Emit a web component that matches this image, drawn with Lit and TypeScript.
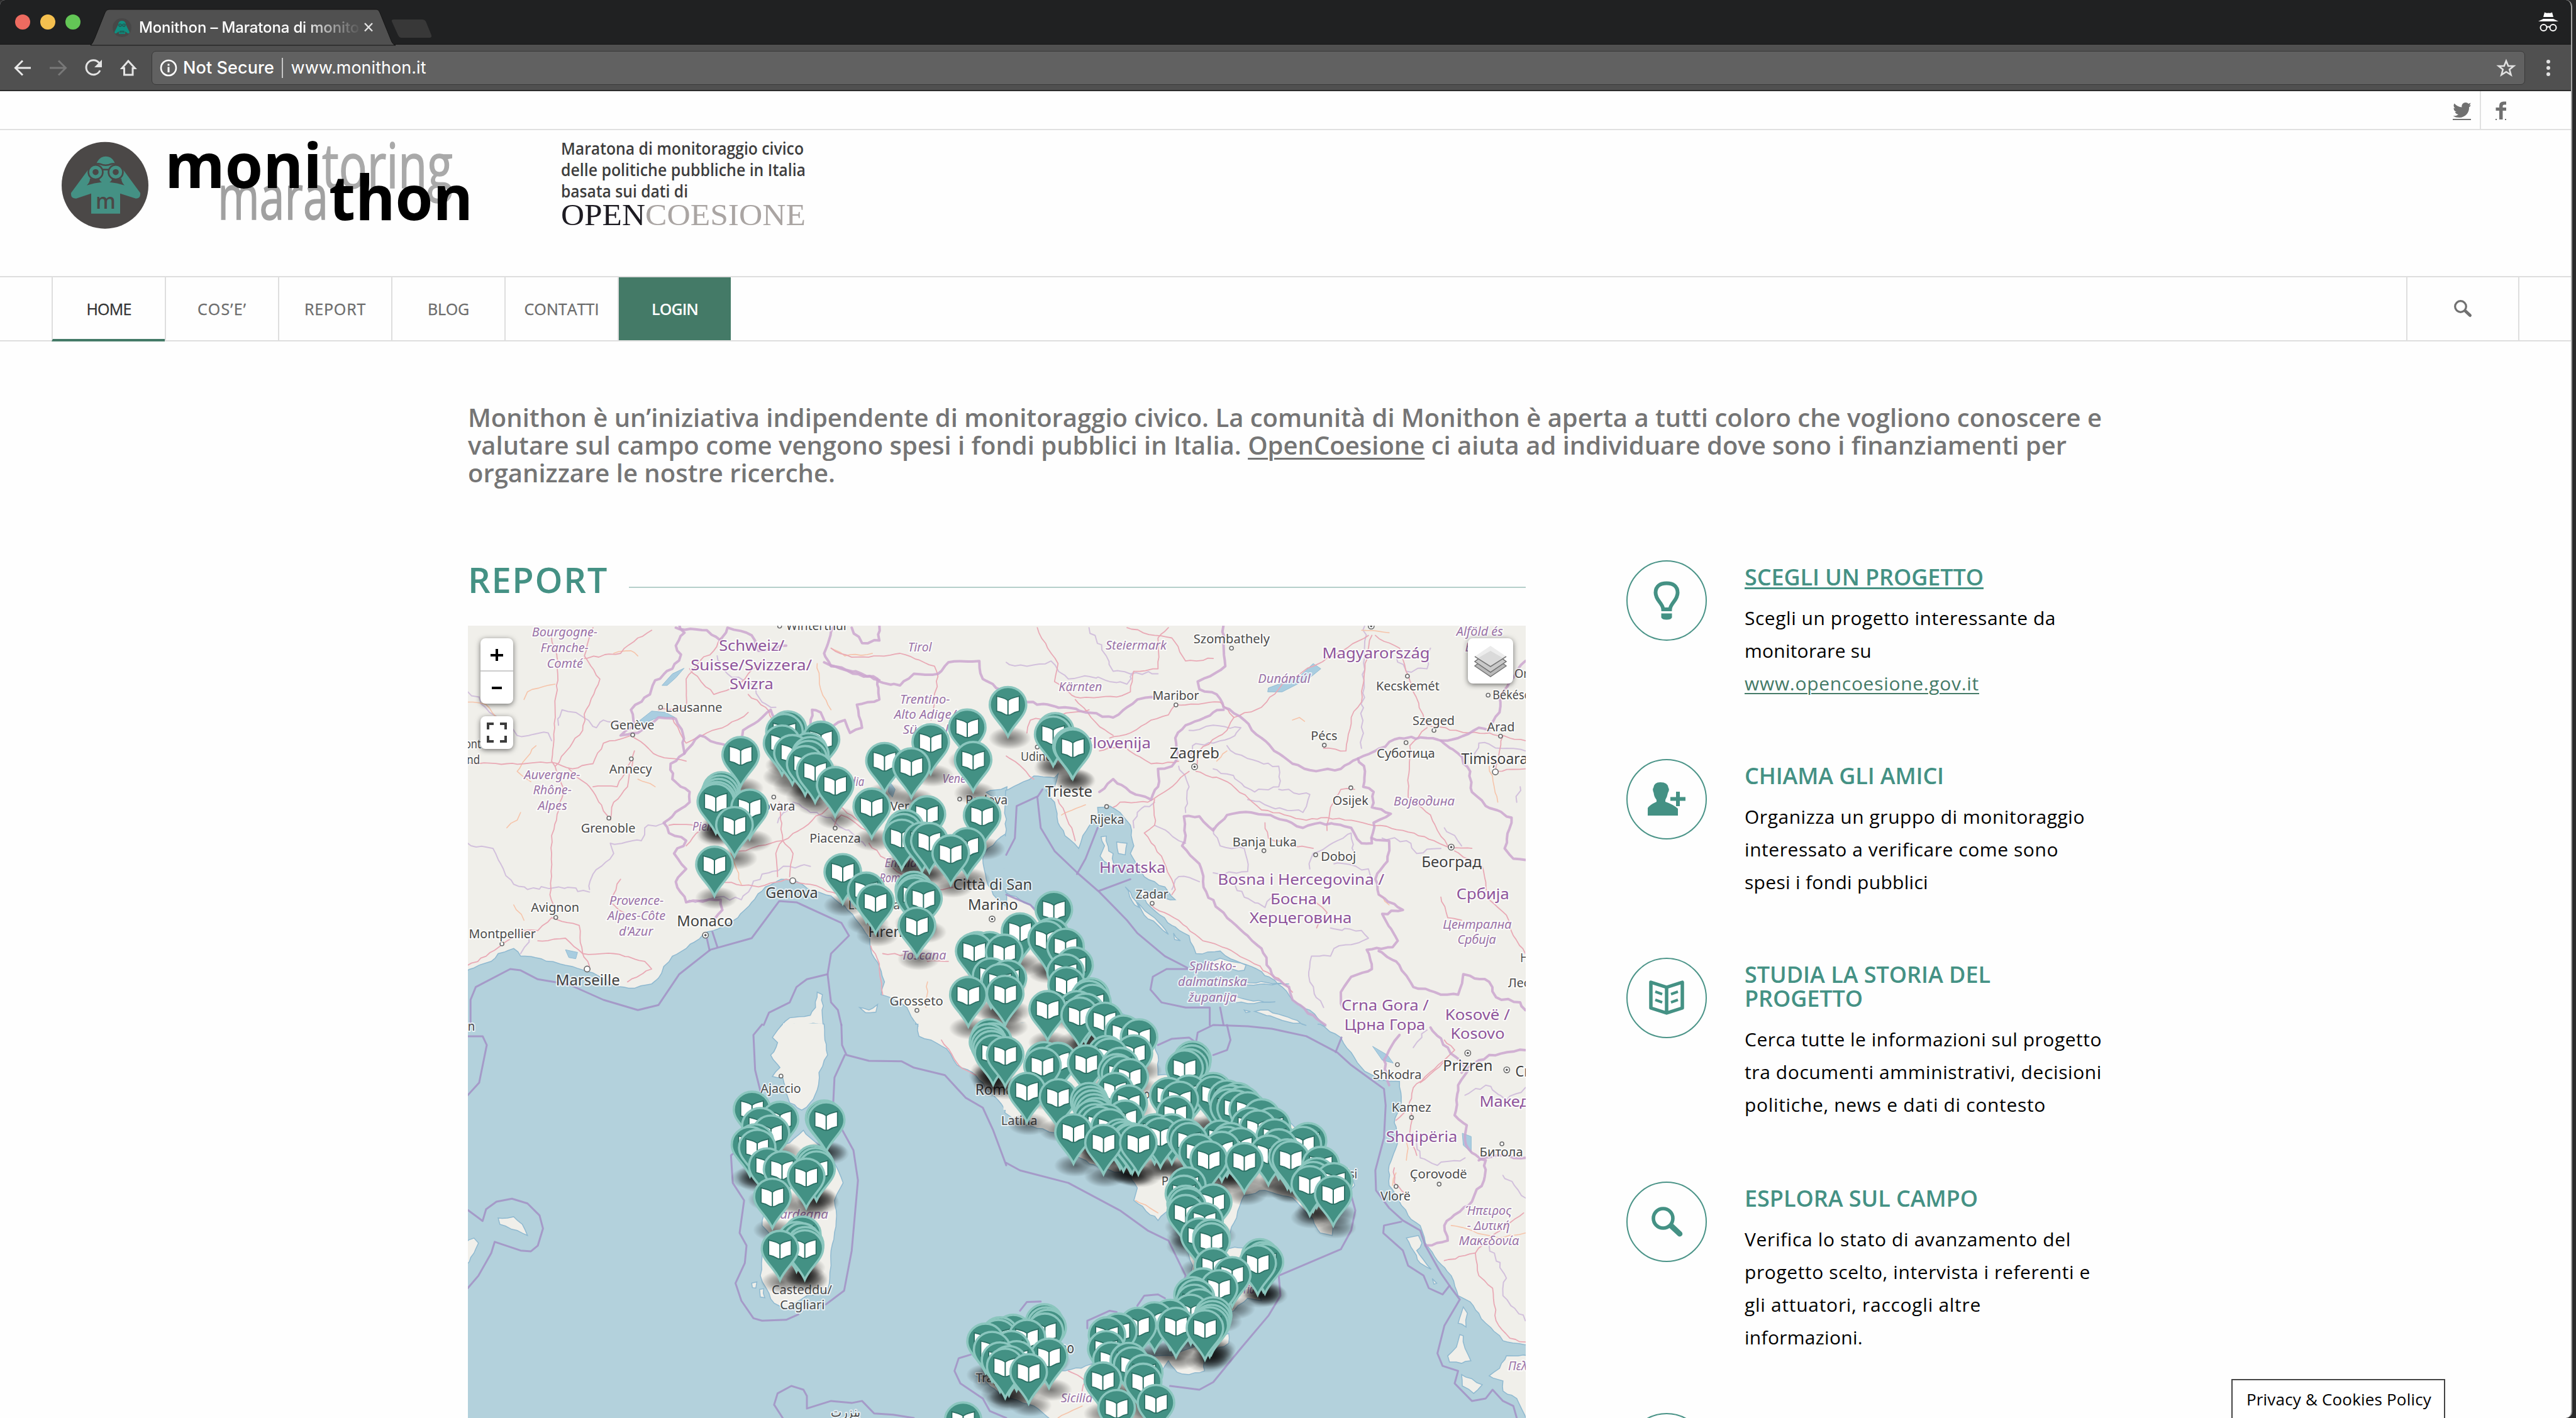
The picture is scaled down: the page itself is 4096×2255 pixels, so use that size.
import { LitElement, html, svg, css } from "lit";

/* One line of text, tracked so that it fills a given measure. */
class FitLine extends LitElement {
  static properties = { w: { type: Number } };
  static styles = css`
    :host { display: block; white-space: pre; width: max-content; }
  `;
  declare w: number;
  render() {
    return html`<slot></slot>`;
  }
  firstUpdated() {
    const n = (this.textContent || "").length;
    const natural = this.getBoundingClientRect().width;
    if (n > 1 && natural > 0) this.style.letterSpacing = (this.w - natural) / n + "px";
  }
}
customElements.define("fit-line", FitLine);

/* ---------- map data: four quadrants, each with its own local grid ---------- */
type Quad = { x: number; y: number; sx: number; sy: number };
const SX = 860 / 1568;
const Q: Record<string, Quad> = {
  nw: { x: 740, y: 990, sx: SX, sy: 640 / 1568 },
  ne: { x: 1600, y: 990, sx: SX, sy: 640 / 1568 },
  sw: { x: 740, y: 1630, sx: SX, sy: 625 / 1568 },
  se: { x: 1600, y: 1630, sx: SX, sy: 625 / 1568 },
};
const px = (q: string, x: number) => Q[q].x + x * Q[q].sx;
const py = (q: string, y: number) => Q[q].y + y * Q[q].sy;
const line = (q: string, pts: string, close = false) =>
  "M" +
  pts
    .trim()
    .split(/\s+/)
    .map((p) => {
      const [a, b] = p.split(",").map(Number);
      return px(q, a).toFixed(1) + " " + py(q, b).toFixed(1);
    })
    .join("L") +
  (close ? "Z" : "");
/* Adds a small regular wobble so that coasts and borders do not look ruled. */
const rough = (q: string, pts: string, amp: number, close = false) => {
  const raw = pts.trim().split(/\s+/).map((p) => p.split(",").map(Number));
  const P = raw.map(([a, b]) => [px(q, a), py(q, b)]);
  if (close) P.push(P[0]);
  let seed = 7 + P.length * 13;
  const rnd = () => ((seed = (seed * 16807) % 2147483647) / 2147483647) * 2 - 1;
  let d = `M${P[0][0].toFixed(1)} ${P[0][1].toFixed(1)}`;
  for (let i = 1; i < P.length; i++) {
    const [x0, y0] = P[i - 1];
    const [x1, y1] = P[i];
    const len = Math.hypot(x1 - x0, y1 - y0);
    const n = len > 300 ? 1 : Math.max(1, Math.round(len / 9));
    for (let k = 1; k < n; k++) {
      const t = k / n;
      d += `L${(x0 + (x1 - x0) * t + rnd() * amp).toFixed(1)} ${(y0 + (y1 - y0) * t + rnd() * amp).toFixed(1)}`;
    }
    d += `L${x1.toFixed(1)} ${y1.toFixed(1)}`;
  }
  return d + (close ? "Z" : "");
};

const SEA: [string, string][] = [
  ["nw", "0,1362 40,1335 75,1320 95,1290 140,1270 160,1300 220,1310 290,1335 310,1340 370,1365 390,1380 430,1415 490,1425 540,1408 560,1385 575,1340 600,1300 640,1270 690,1215 730,1195 790,1150 830,1090 870,1030 915,1000 960,1008 990,1035 1060,1065 1100,1105 1140,1170 1172,1230 1178,1290 1200,1340 1215,1400 1205,1450 1240,1465 1280,1500 1300,1550 1312,1572 0,1572"],
  ["nw", "1570,820 1540,850 1515,880 1500,920 1510,1000 1530,1060 1570,1110"],
  ["nw", "1510,662 1540,652 1570,640 1570,690 1530,680"],
  ["ne", "-2,655 50,620 80,598 140,605 150,590 140,640 115,655 140,700 150,780 170,830 210,880 222,830 250,775 265,780 265,720 300,715 330,740 360,790 370,870 360,900 400,990 460,1030 490,1080 440,1070 400,1040 380,1050 420,1110 480,1180 530,1220 550,1290 620,1280 650,1310 740,1360 800,1420 830,1470 880,1510 925,1572 420,1572 300,1500 240,1400 200,1270 130,1180 80,1110 -2,1050"],
  ["sw", "0,-3 1312,-3 1315,45 1350,60 1395,95 1425,160 1470,190 1500,230 1572,350 1572,1575 0,1575"],
  ["se", "-4,-3 910,-3 970,50 1000,110 1030,170 1080,220 1140,225 1145,310 1125,390 1135,470 1110,560 1110,640 1130,680 1165,760 1200,800 1215,870 1250,940 1290,1000 1310,1080 1345,1105 1370,1150 1390,1190 1440,1260 1515,1275 1515,1320 1450,1320 1430,1370 1400,1400 1440,1420 1440,1460 1480,1490 1508,1575 -4,1575"],
];
const LAND: [string, string][] = [
  ["nw", "1020,1440 1035,1450 1037,1572 915,1572 940,1540 1000,1530 1015,1500"],
  ["nw", "1143,1500 1170,1510 1195,1488 1190,1518 1160,1520"],
  ["sw", "905,20 920,-4 1040,-4 1050,120 1025,190 1020,260 1000,310 975,340 940,310 930,270 920,210 890,205 912,170 885,120 905,70 890,50"],
  ["sw", "980,420 1000,450 1060,520 1095,630 1070,700 1075,780 1060,900 1060,960 1050,1060 990,1080 930,1130 895,1110 880,1070 855,1000 860,900 880,830 860,800 880,640 830,560 850,480 940,470"],
  ["sw", "830,1030 845,1025 842,1050 832,1048"],
  ["sw", "853,1055 865,1052 868,1088 855,1085"],
  ["sw", "95,770 140,765 165,795 180,840 150,820 100,795"],
  ["sw", "0,870 25,850 38,870 25,910 0,960"],
  ["se", "-4,-4 410,-4 440,120 440,200 560,200 650,230 800,360 900,480 1000,590 1010,640 950,740 945,840 910,830 880,760 830,690 750,660 690,680 660,790 630,890 690,890 700,1000 740,1100 700,1090 660,1140 620,1170 560,1130 500,1100 520,1050 540,960 520,890 500,820 470,740 440,780 370,700 380,650 360,600 270,570 200,520 140,430 40,390 -4,350"],
  ["se", "-4,1400 170,1380 230,1360 300,1330 480,1320 645,1230 645,1270 570,1320 575,1380 530,1395 495,1385 470,1340 440,1400 430,1575 130,1575 80,1520 -4,1480"],
  ["sw", "1480,1400 1572,1400 1572,1490"],
  ["se", "1160,850 1195,840 1205,870 1190,900 1232,975 1200,950 1180,900"],
  ["se", "1315,1235 1325,1240 1330,1290 1347,1340 1320,1350 1285,1345 1280,1320 1305,1285"],
  ["se", "1320,1395 1380,1435 1355,1470 1322,1440"],
  ["se", "1325,1125 1337,1150 1333,1205 1310,1190"],
  ["se", "1235,1012 1248,1030 1240,1034"],
  ["ne", "275,835 290,832 297,890 310,900 310,965 295,940 272,910 285,870"],
  ["ne", "320,855 350,860 345,905 325,900"],
  ["ne", "345,1030 360,1050 385,1110 372,1100"],
  ["ne", "380,1090 440,1165 470,1215 440,1180 400,1140"],
  ["ne", "570,1325 620,1308 695,1335 690,1355 600,1352"],
  ["ne", "500,1402 640,1395 820,1408 700,1412"],
  ["ne", "590,1462 640,1448 700,1470 780,1478 700,1485 620,1470"],
  ["ne", "720,1515 760,1510 830,1545 870,1570 800,1550"],
  ["ne", "485,1210 505,1240 488,1235"],
  ["ne", "690,1510 708,1516 695,1520"],
];
const LAKES: [string, string][] = [
  ["nw", "505,382 540,345 580,350 608,370 560,368 520,392"],
  ["nw", "570,245 600,200 634,178 610,215 585,245"],
  ["nw", "1230,620 1246,650 1238,680 1226,660"],
  ["nw", "290,1275 325,1285 320,1310 300,1305"],
  ["ne", "758,270 760,255 850,210 890,160 912,180 880,215 800,270"],
  ["se", "1062,85 1105,120 1122,152 1090,140"],
  ["se", "1322,432 1348,445 1348,508 1325,480"],
];
const BORDERS: [string, string][] = [
  ["nw", "620,10 635,40 610,90 625,125 600,180 550,225 535,280 480,340 490,400 450,440 500,430 560,370 610,375 630,430 635,510 595,550 600,610 650,660 650,700 575,780 590,820 640,850 605,900 640,960 610,1010 640,1090 740,1080 745,1120 725,1150"],
  ["nw", "635,510 680,440 730,470 800,490 805,420 860,370 885,340 900,400 950,460 1000,400 1005,340 1030,350 1050,410 1100,380 1115,430 1150,410 1135,320 1200,300 1195,220 1090,175 1040,155"],
  ["nw", "1200,230 1260,245 1300,200 1370,200 1400,155 1490,150 1500,220 1568,270"],
  ["nw", "1070,10 1040,120 1060,170 1200,225"],
  ["nw", "610,20 700,30 740,70 760,20 830,50 850,110 930,90"],
  ["nw", "1120,20 1150,80 1200,70 1200,10"],
  ["ne", "0,270 60,310 170,330 230,350 310,370 340,340 380,300 420,290 460,290"],
  ["ne", "630,10 635,170 590,210 555,230 560,260 610,280 630,330 690,380 740,450 790,510 830,550 880,575 970,570 1020,530 1070,500 1140,450 1220,450 1260,460 1310,450 1370,410 1400,420"],
  ["ne", "630,340 600,350 560,380 520,400 490,450 500,520 480,560 440,570 440,640 420,690 360,660 310,610 270,660"],
  ["ne", "1020,530 1040,580 1035,640 1065,660 1060,720 1115,745 1065,780 1060,860 1030,860 1000,800 910,780 860,800 780,760 710,740 640,750 600,810 560,755 515,755 520,830 510,870 560,940 580,1050 620,1120 690,1210 740,1270 770,1370 820,1420 830,1470 890,1530 925,1568"],
  ["ne", "1060,840 1110,850 1105,930 1070,1000 1080,1060 1150,1120 1090,1135 1135,1240 1120,1265 1045,1275 1060,1350 1000,1380 970,1440 975,1500"],
  ["ne", "1260,460 1310,510 1345,580 1350,660 1390,715 1465,760 1445,880 1470,920 1505,925"],
  ["ne", "1505,150 1460,230 1430,290 1430,350 1400,400"],
  ["ne", "1080,1280 1130,1320 1180,1420 1260,1450 1310,1450 1325,1370 1400,1400 1420,1460 1490,1480 1505,1510"],
  ["se", "1140,40 1110,100 1095,140 1110,240"],
  ["se", "1230,10 1280,90 1340,180 1310,240 1305,300 1300,360 1335,400 1330,460 1350,510 1390,540 1385,620 1340,720 1290,770 1270,800 1280,860 1215,880"],
  ["se", "1320,190 1400,120 1505,100"],
  ["se", "1370,540 1440,520 1505,530"],
];
const SEALINES: [string, string][] = [
  ["nw", "15,1568 15,1470 30,1420 130,1350 160,1355 210,1390 300,1410 400,1470 500,1510 560,1490 620,1370 710,1275 830,1230 910,1085 960,1090 1090,1170 1112,1220 1060,1290 1050,1370 990,1390 960,1420 940,1480 880,1520 865,1568"],
  ["nw", "1050,1370 1060,1480 1080,1510 1090,1568"],
  ["nw", "700,1230 708,1278"],
  ["nw", "716,1205 730,1262"],
  ["sw", "860,-2 835,40 840,180 860,290 815,470 770,520 775,630 808,700 795,830 815,880 810,950 783,1030 800,1100 835,1170 860,1180 930,1176 965,1155"],
  ["sw", "1090,-2 1092,80 1105,120 1170,143 1265,145 1300,170 1390,200 1450,290 1500,330 1530,420 1568,560"],
  ["sw", "1100,120 1070,210 1065,350 1125,500 1138,620 1120,900 1098,1060 1045,1115"],
  ["sw", "7,45 50,45 62,80 40,230 7,280"],
  ["sw", "7,738 50,782 60,735 90,705 135,693 180,712 215,760 225,812 210,880 190,903 160,900 85,865 75,910 38,1000 7,1050"],
  ["sw", "920,1568 895,1515 905,1470 945,1440 980,1455 990,1480 990,1530 1060,1500 1120,1508 1150,1500 1185,1550 1240,1555 1300,1568"],
  ["sw", "1470,1313 1430,1330 1418,1380 1435,1430 1500,1490 1520,1540 1568,1568"],
  ["ne", "105,650 90,680 100,800 140,890 210,980 270,1050 350,1160 380,1210 460,1300 525,1345"],
  ["ne", "90,678 30,715 25,840 0,905"],
  ["ne", "265,800 230,920 205,980"],
  ["ne", "270,1045 360,1000"],
  ["ne", "0,1060 70,1100 130,1190"],
  ["ne", "525,1350 465,1350 425,1380 418,1430 450,1480 520,1500 590,1500 590,1568"],
  ["ne", "620,1500 630,1568"],
  ["se", "440,80 480,55 530,50 550,70 555,30 600,0 700,5 770,15 870,45 960,110 1000,160 1060,220 1095,255 1100,320 1095,450 1070,580 1072,660 1110,730 1150,780 1200,820 1215,880 1260,990 1290,1050 1315,1095 1270,1200 1250,1310 1265,1360 1310,1380 1300,1430 1350,1500 1390,1490 1410,1455 1440,1500 1470,1520 1480,1568"],
  ["se", "640,0 650,60 640,100 600,120"],
  ["se", "955,108 972,50"],
  ["se", "0,550 40,580 180,630 330,740 410,820 470,860 520,1000 500,1080"],
  ["se", "1000,680 1012,740 1000,820 970,895 790,1000 795,1080 760,1160 680,1290 600,1425 560,1455 475,1440"],
  ["se", "1145,785 1095,800 1093,830 1150,900 1165,960 1210,1000 1225,1050 1265,1075 1285,1040"],
  ["se", "380,1120 400,1080 440,1075 460,1090"],
  ["se", "235,1210 235,1180 300,1140 320,1145"],
  ["se", "40,1140 60,1105 100,1103"],
];
const ADMIN: [string, string][] = [
  ["nw", "7,270 40,290 70,350 130,400 150,440 240,430 250,460"],
  ["nw", "270,400 280,340 320,350 380,410 400,380 450,390"],
  ["nw", "7,860 80,880 110,960 140,1020 180,1040 270,1030 360,1050"],
  ["nw", "360,1040 370,980 430,900 420,860 510,850 520,800 580,780"],
  ["nw", "200,1210 160,1290"],
  ["nw", "640,1090 730,1070 800,1080 860,980 940,950 1000,950"],
  ["nw", "905,780 950,700 1000,740 1060,760 1160,870"],
  ["nw", "730,130 760,200 830,240 860,310 900,330"],
  ["ne", "0,155 60,170 130,150 180,220 240,210 350,240 370,190"],
  ["ne", "240,20 290,130 310,190 440,200"],
  ["ne", "530,420 600,400 680,410 650,450 600,470 540,480 530,540"],
  ["ne", "640,480 700,530 790,560 790,640 720,660 640,590 600,570"],
  ["ne", "790,650 880,670 860,740 750,710 700,690"],
  ["ne", "500,560 530,640 520,740"],
  ["ne", "600,800 620,870 690,880 700,970 600,975"],
  ["ne", "640,990 690,1070 750,1110 770,1070"],
  ["ne", "880,960 890,900 960,850 1000,820 1010,900"],
  ["ne", "950,940 1050,960 1060,1010"],
  ["ne", "940,1190 1030,1200 1050,1230 950,1270 940,1300 885,1300 880,1400 920,1500"],
  ["ne", "1090,840 1160,850 1190,900 1260,880"],
  ["ne", "1270,800 1320,870"],
  ["ne", "370,800 380,740 430,700"],
  ["ne", "430,790 500,850 520,860"],
  ["ne", "560,1010 500,990 480,1040"],
  ["ne", "1040,10 1030,490"],
  ["ne", "1130,130 1160,190 1220,180 1230,100"],
  ["ne", "1360,540 1370,470 1505,500"],
  ["ne", "1480,700 1490,640"],
  ["se", "1180,430 1200,530 1250,560 1330,530"],
  ["se", "1330,280 1390,240 1450,300 1505,250"],
  ["se", "1440,600 1505,690"],
  ["se", "1400,880 1450,1010 1440,1080 1505,1180"],
  ["se", "1220,20 1180,90"],
];
const ROADS: [string, string][] = [
  ["nw", "250,60 270,160 260,330 250,540 275,600 285,660 250,830 250,900 245,1060 260,1120"],
  ["nw", "370,20 345,130 390,220 350,340 340,420 310,470 260,560"],
  ["nw", "7,545 120,550 250,545 310,570 370,550 400,470 480,440"],
  ["nw", "340,140 450,120 500,60 540,30"],
  ["nw", "300,570 360,640 420,770 430,700 470,640 490,500"],
  ["nw", "370,640 440,640 480,540"],
  ["nw", "600,370 640,470 700,430 760,400 820,350"],
  ["nw", "480,440 560,520 640,540"],
  ["nw", "560,340 640,330 640,220 680,150 720,110 740,60"],
  ["nw", "650,180 720,280 790,250 820,200 860,150"],
  ["nw", "820,280 870,330 900,400 920,500"],
  ["nw", "590,790 690,790 640,870"],
  ["nw", "780,900 850,870 920,850 980,800 1070,700 1180,820"],
  ["nw", "910,700 920,850 900,900 905,990"],
  ["nw", "740,1010 850,1030 930,1000 1000,1020 1080,1060"],
  ["nw", "920,850 950,900 940,990"],
  ["nw", "1060,100 1120,135 1200,130 1260,120 1360,170 1370,210 1350,380"],
  ["nw", "1170,860 1250,970 1350,1050 1420,1030"],
  ["nw", "7,1335 60,1300 110,1250 160,1200 210,1200 250,1150 330,1180 340,1290"],
  ["nw", "210,1240 290,1230 340,1290 430,1290 520,1320 540,1350 470,1400"],
  ["nw", "340,1290 360,1340 350,1360"],
  ["nw", "450,1000 420,1090 460,1130"],
  ["nw", "1175,1260 1200,1330 1210,1450"],
  ["nw", "1210,1290 1330,1300 1340,1320 1400,1320"],
  ["nw", "1070,790 1090,750 1180,820"],
  ["ne", "90,20 120,100 150,160 140,230 180,270 200,290 320,290 360,270 370,190 440,180 440,60 470,20"],
  ["ne", "350,20 430,50 480,60 520,150 600,140"],
  ["ne", "200,300 260,390 310,440"],
  ["ne", "300,450 360,430 420,380 470,360 490,320 620,310 660,370 740,330 800,240 890,170 960,120 1050,50"],
  ["ne", "1060,50 1040,160 1030,310 1000,370 985,500 920,490"],
  ["ne", "1070,50 1140,100 1180,270 1220,400 1340,430 1400,430 1505,460"],
  ["ne", "660,370 640,420 560,500 550,570"],
  ["ne", "270,500 330,480 420,550 500,540"],
  ["ne", "550,580 640,620 740,730 870,770 930,760 1000,770 1150,810 1240,850 1290,880 1350,880"],
  ["ne", "530,580 470,650 410,700 330,700 310,720"],
  ["ne", "430,690 430,790 400,820 450,910 490,1040 480,1060"],
  ["ne", "1220,410 1170,480 1165,680 1230,750 1250,810 1280,870"],
  ["ne", "1440,440 1430,500 1420,580 1505,570"],
  ["ne", "930,810 940,720 970,650 1010,650"],
  ["ne", "750,780 760,840 830,870 890,880"],
  ["ne", "420,1100 500,1160 570,1240 640,1270 720,1330 800,1400 830,1440"],
  ["ne", "1300,890 1380,950 1400,1080 1450,1140 1470,1220 1505,1290"],
  ["ne", "0,520 50,570 80,610"],
  ["ne", "60,430 70,380 160,360 240,340"],
  ["ne", "150,690 190,800 200,850"],
  ["ne", "1260,1070 1280,1150 1320,1160"],
  ["ne", "900,1190 930,1130 890,1080"],
  ["se", "1270,60 1300,100 1180,250 1165,330 1130,380"],
  ["se", "1280,140 1200,230"],
  ["se", "1180,330 1170,430 1190,520"],
  ["se", "1125,570 1125,630 1160,680"],
  ["se", "1270,940 1330,920 1360,910 1370,1000 1410,1050 1420,1180 1460,1250 1505,1265"],
  ["se", "1360,910 1420,830 1500,750"],
  ["se", "180,1380 230,1420 220,1460"],
  ["sw", "1380,60 1430,160 1480,200"],
];
const TRACKS: [string, string][] = [
  ["nw", "170,300 180,270 260,240"],
  ["nw", "7,310 60,320 90,370"],
  ["nw", "120,800 150,770 160,740"],
  ["nw", "430,120 480,110 500,130"],
  ["nw", "1060,100 1100,130 1180,120"],
  ["nw", "1020,160 1030,260 1060,340"],
  ["nw", "500,610 550,640"],
  ["nw", "140,1100 170,1160"],
  ["nw", "800,1020 770,900"],
  ["nw", "1340,1400 1335,1500"],
  ["nw", "205,480 150,580 190,620"],
  ["ne", "160,750 230,710"],
  ["ne", "830,380 850,370 865,385"],
  ["ne", "640,500 610,540"],
  ["ne", "1110,1100 1080,1060"],
  ["ne", "1400,560 1425,700"],
  ["ne", "1460,200 1440,300"],
  ["ne", "1030,30 1110,40"],
  ["se", "1165,450 1160,540"],
  ["se", "1130,590 1120,640"],
  ["se", "1290,800 1430,850 1505,830"],
  ["se", "150,1568 220,1520"],
  ["se", "375,700 440,750"],
];

/* quadrant, text, left, right, baseline, kind */
type Label = [string, string, number, number, number, string];
const LABELS: Label[] = [
  ["nw", "Bourgogne-", 193, 383, 55, "r"], ["nw", "Franche-", 218, 357, 115, "r"], ["nw", "Comté", 236, 341, 176, "r"],
  ["nw", "Schweiz/", 735, 925, 110, "c"], ["nw", "Suisse/Svizzera/", 653, 1005, 185, "c"], ["nw", "Svizra", 766, 893, 260, "c"],
  ["nw", "Winterthur", 930, 1110, 30, "t"], ["nw", "Tirol", 1283, 1352, 112, "r"],
  ["nw", "Trentino-", 1260, 1405, 315, "r"], ["nw", "Alto Adige/", 1243, 1422, 374, "r"], ["nw", "Südtirol", 1268, 1400, 434, "r"],
  ["nw", "Lausanne", 580, 745, 347, "t"], ["nw", "Genève", 420, 548, 416, "t"], ["nw", "Annecy", 417, 541, 588, "t"],
  ["nw", "Auvergne-", 170, 333, 610, "r"], ["nw", "Rhône-", 196, 308, 670, "r"], ["nw", "Alpes", 210, 295, 730, "r"],
  ["nw", "Grenoble", 335, 493, 819, "t"], ["nw", "Novara", 835, 956, 733, "t"], ["nw", "Lombardia", 1010, 1156, 636, "r"],
  ["nw", "Veneto", 1383, 1480, 625, "r"], ["nw", "Verona", 1232, 1350, 733, "t"], ["nw", "Padova", 1450, 1572, 708, "t"],
  ["nw", "Piemonte", 658, 790, 812, "r"], ["nw", "Piacenza", 998, 1146, 857, "t"], ["nw", "Genova", 870, 1022, 1072, "b"],
  ["nw", "Emilia-", 1215, 1320, 953, "r"], ["nw", "Romagna", 1200, 1330, 1012, "r"],
  ["nw", "Città di San", 1414, 1643, 1042, "b"], ["nw", "Marino", 1457, 1602, 1120, "b"],
  ["nw", "Avignon", 190, 330, 1127, "t"], ["nw", "Provence-", 417, 575, 1100, "r"], ["nw", "Alpes-Côte", 412, 580, 1158, "r"], ["nw", "d'Azur", 445, 544, 1219, "r"],
  ["nw", "Monaco", 613, 776, 1184, "b"], ["nw", "Montpellier", 10, 204, 1231, "t"], ["nw", "Marseille", 262, 448, 1414, "b"],
  ["nw", "La Spezia", 1110, 1260, 1117, "t"], ["nw", "Firenze", 1168, 1310, 1224, "b"], ["nw", "Toscana", 1264, 1394, 1312, "r"],
  ["nw", "Grosseto", 1230, 1385, 1492, "t"], ["nw", "ont-", -2, 55, 490, "t"], ["nw", "nd", 4, 42, 551, "t"],
  ["ne", "Steiermark", 288, 465, 105, "r"], ["ne", "Kärnten", 152, 278, 267, "r"], ["ne", "Szombathely", 543, 764, 82, "t"],
  ["ne", "Maribor", 424, 559, 301, "t"], ["ne", "Magyarország", 916, 1228, 139, "c"], ["ne", "Dunántúl", 730, 882, 235, "r"],
  ["ne", "Kecskemét", 1072, 1256, 265, "t"], ["ne", "Alföld és", 1305, 1440, 52, "r"], ["ne", "Észak", 1330, 1420, 112, "r"],
  ["ne", "Békéscsaba", 1410, 1590, 300, "t"], ["ne", "Oradea", 1473, 1590, 216, "t"], ["ne", "Szeged", 1178, 1300, 400, "t"],
  ["ne", "Arad", 1394, 1474, 424, "t"], ["ne", "Pécs", 883, 960, 457, "t"], ["ne", "Slovenija", 225, 419, 489, "c"],
  ["ne", "Zagreb", 474, 618, 529, "b"], ["ne", "Суботица", 1074, 1243, 526, "t"], ["ne", "Timișoara", 1319, 1512, 552, "b"],
  ["ne", "Udine", 42, 132, 538, "t"], ["ne", "Trieste", 113, 250, 678, "b"], ["ne", "Rijeka", 242, 342, 783, "t"],
  ["ne", "Osijek", 946, 1050, 710, "t"], ["ne", "Војводина", 1123, 1300, 713, "r"], ["ne", "Banja Luka", 656, 842, 871, "t"],
  ["ne", "Doboj", 912, 1014, 928, "t"], ["ne", "Београд", 1204, 1378, 952, "b"], ["ne", "Hrvatska", 270, 462, 975, "c"],
  ["ne", "Zadar", 375, 470, 1075, "t"], ["ne", "Bosna i Hercegovina /", 613, 1096, 1022, "c"], ["ne", "Босна и", 766, 942, 1098, "c"],
  ["ne", "Херцеговина", 705, 1002, 1172, "c"], ["ne", "Србија", 1305, 1458, 1078, "c"], ["ne", "Централна", 1266, 1465, 1192, "r"],
  ["ne", "Србија", 1308, 1420, 1252, "r"], ["ne", "Splitsko-", 530, 667, 1355, "r"], ["ne", "dalmatinska", 498, 698, 1416, "r"],
  ["ne", "županija", 528, 668, 1477, "r"], ["ne", "Crna Gora /", 972, 1225, 1511, "c"], ["ne", "Kosovë /", 1272, 1460, 1548, "c"],
  ["ne", "Ниш", 1490, 1560, 1322, "t"], ["ne", "Лесковац", 1455, 1620, 1420, "t"],
  ["se", "Црна Гора", 980, 1215, 20, "c"], ["se", "Kosovo", 1288, 1445, 55, "c"], ["se", "Prizren", 1266, 1410, 184, "b"], ["se", "Скопје", 1476, 1600, 205, "b"],
  ["se", "Shkodra", 1063, 1204, 215, "t"], ["se", "Kamez", 1117, 1232, 345, "t"], ["se", "Македонија", 1372, 1640, 326, "c"],
  ["se", "Shqipëria", 1101, 1308, 467, "c"], ["se", "Битола", 1372, 1498, 525, "t"], ["se", "Çorovodë", 1170, 1336, 611, "t"],
  ["se", "Vlorë", 1085, 1172, 700, "t"], ["se", "Ήπειρος", 1330, 1465, 757, "r"], ["se", "- Δυτική", 1336, 1460, 818, "r"], ["se", "Μακεδονία", 1312, 1487, 878, "r"],
  ["se", "Πελο", 1455, 1530, 1378, "r"], ["se", "Latina", -15, 90, 398, "t"], ["se", "Brindisi", 900, 1018, 611, "t"], ["se", "Potenza", 450, 580, 640, "t"],
  ["se", "Palermo", 60, 197, 1310, "b"], ["se", "Sicilia", 158, 250, 1506, "r"], ["se", "Campobasso", 250, 416, 293, "t"],
  ["se", "Calabria", 620, 720, 1072, "r"],
  ["sw", "Ajaccio", 856, 973, 270, "t"], ["sw", "Sardegna", 893, 1052, 773, "r"], ["sw", "Casteddu/", 888, 1063, 1074, "t"], ["sw", "Cagliari", 912, 1042, 1135, "t"],
  ["sw", "Roma", 1478, 1590, 278, "b"], ["sw", "Trapani", 1480, 1600, 1425, "t"], ["sw", "بنزرت", 1060, 1145, 1562, "t"], ["sw", "Italia", 1464, 1580, 100, "c"],
  ["sw", "n", 7, 28, 22, "t"],
];
/* quadrant, x, y, kind: t = town ring, b = city ring, k = capital */
const DOTS: [string, number, number, string][] = [
  ["nw", 566, 330, "t"], ["nw", 485, 438, "t"], ["nw", 481, 531, "t"], ["nw", 416, 762, "t"], ["nw", 894, 680, "t"], ["nw", 1072, 801, "t"],
  ["nw", 949, 1006, "b"], ["nw", 262, 1149, "t"], ["nw", 106, 1252, "t"], ["nw", 353, 1350, "b"], ["nw", 696, 1218, "k"], ["nw", 1527, 1155, "k"],
  ["nw", 1309, 1511, "t"], ["nw", 911, 14, "t"], ["nw", 1433, 688, "t"],
  ["ne", 653, 100, "t"], ["ne", 492, 321, "t"], ["ne", 1163, 209, "t"], ["ne", 1397, 283, "t"], ["ne", 1240, 420, "t"], ["ne", 1433, 443, "t"],
  ["ne", 922, 478, "t"], ["ne", 546, 562, "k"], ["ne", 1159, 468, "t"], ["ne", 1418, 582, "b"], ["ne", 999, 644, "t"], ["ne", 291, 717, "t"],
  ["ne", 747, 889, "t"], ["ne", 897, 905, "t"], ["ne", 1290, 875, "k"], ["ne", 423, 1094, "t"], ["ne", 1058, 14, "k"], ["ne", 90, 485, "t"],
  ["se", 1338, 112, "k"], ["se", 1451, 179, "k"], ["se", 1134, 158, "t"], ["se", 1175, 369, "t"], ["se", 1437, 474, "t"], ["se", 1255, 635, "t"], ["se", 1130, 644, "t"],
  ["sw", 915, 204, "t"],
];
const MARKS: Record<string, string> = {
  nw: "798,440 935,340 925,350 1031,380 918,395 948,432 995,425 1000,440 995,455 985,475 1014,503 1072,557 742,577 738,590 734,603 730,615 726,623 824,645 780,713 722,867 1215,463 1349,390 1293,484 1455,333 1472,459 1178,641 1338,671 1498,676 1275,725 1270,740 1265,762 1345,775 1324,773 1455,795 1407,823 1094,896 1162,968 1189,1013 1300,965 1304,978 1302,988 1328,1000 1309,1105 1475,1205 1485,1200 1520,1200 1562,1210 1524,1302 1550,1325 1458,1375 1565,1370 1520,1540 1530,1555",
  ne: "5,245 142,347 136,360 193,410 189,405 138,1043 40,1127 130,1147 117,1157 172,1187 198,1260 172,1287 175,1337 5,1310 245,1380 240,1390 250,1405 205,1430 230,1440 213,1455 120,1430 285,1475 340,1525 385,1540",
  sw: "1515,-10 1520,5 1525,18 1530,35 1565,42 831,260 912,300 855,325 886,355 840,390 825,400 846,412 875,486 918,498 1010,475 1015,485 1018,498 988,527 890,607 1046,302 1040,295 977,758 960,780 975,785 985,800 912,815 984,813 1550,1160 1545,1170 1508,1185 1527,1218 1550,1260 1565,1285 1443,1500",
  se: "370,35 290,38 300,48 110,62 150,65 105,85 232,75 330,85 320,110 330,118 358,130 540,60 538,75 530,90 517,95 60,185 150,210 315,185 355,235 240,225 245,240 250,255 255,270 260,285 250,295 258,310 270,320 290,310 300,330 345,295 195,350 330,370 340,380 360,385 282,392 383,393 365,390 430,350 480,350 447,365 520,370 530,385 600,185 530,195 470,205 600,200 640,215 503,220 670,225 650,235 685,240 645,250 665,255 700,262 490,278 740,290 770,325 705,325 730,335 778,370 620,375 650,385 640,400 680,405 555,430 625,420 587,458 690,465 760,435 790,410 860,400 875,385 825,458 815,450 912,480 900,525 890,540 880,557 950,545 948,597 525,562 515,595 520,635 525,645 520,672 600,630 575,705 560,765 595,770 595,785 600,885 655,920 570,965 617,972 735,848 745,860 750,868 729,873 540,1000 550,1010 545,1030 560,1048 535,1070 600,1080 598,1095 595,1110 590,1120 576,1132 492,1122 475,1090 430,1100 382,1122 325,1145 292,1160 290,1215 305,1260 355,1262 365,1280 400,1310 397,1345 280,1340 320,1450 434,1430 110,1108 115,1120 120,1130 112,1145 20,1150 60,1170 15,1215 124,1245 30,1255 8,1275 65,1307",
};
const markers = Object.entries(MARKS)
  .flatMap(([q, s]) => s.split(" ").map((p) => { const [a, b] = p.split(",").map(Number); return { x: px(q, a), y: py(q, b) }; }))
  .sort((a, b) => a.y - b.y);

class ReportMap extends LitElement {
  static styles = css`
    :host { display: block; position: relative; width: 1682px; height: 1260px; overflow: hidden; background: #f0efea; }
    svg { display: block; }
    .canvas { width: 1682px; height: 1260px; }
    .sea { fill: #b3d1dc; stroke: #8fb9d0; stroke-width: 1.5; }
    .land { fill: #f0efea; stroke: #8fb9d0; stroke-width: 1.5; }
    .lake { fill: #a9cde0; stroke: #92bcd4; }
    .line { fill: none; stroke-linejoin: round; stroke-linecap: round; }
    .border { stroke: #cba6cf; stroke-width: 4; opacity: .85; }
    .offshore { stroke: #a394c5; stroke-width: 3; opacity: .9; }
    .admin { stroke: #d2c0dc; stroke-width: 2; }
    .road { stroke: #e9a9b5; stroke-width: 1.8; }
    .track { stroke: #f6c4aa; stroke-width: 1.6; }
    .label { font-family: "Noto Sans", "Open Sans", sans-serif; paint-order: stroke; stroke: #fff; stroke-opacity: .7; stroke-width: 4px; stroke-linejoin: round; }
    .t { font-size: 20.5px; fill: #4b4b4b; }
    .b { font-size: 23.5px; fill: #404040; }
    .r { font-size: 19.5px; font-style: italic; fill: #9a73a8; }
    .c { font-size: 24px; fill: #8f559c; }
    .control { position: absolute; background: #fff; border-radius: 8px; box-shadow: 0 2px 8px rgba(0, 0, 0, .55); display: flex; flex-direction: column; align-items: center; justify-content: center; }
    .zoom { left: 20px; top: 20px; width: 52px; height: 104px; }
    .full { left: 20px; top: 144px; width: 52px; height: 52px; }
    .layers { right: 20px; top: 20px; width: 72px; height: 72px; }
    .step { flex: 1; width: 100%; display: flex; align-items: center; justify-content: center; }
    .step + .step { border-top: 2px solid #ccc; }
  `;
  paths(list: [string, string][], cls: string, amp: number) {
    return list.map(([q, p]) => svg`<path class=${"line " + cls} d=${rough(q, p, amp)}></path>`);
  }
  render() {
    return html`
      <svg class="canvas" viewBox="744 995 1682 1260">
        <defs>
          <radialGradient id="sh">
            <stop offset="0" stop-color="#000" stop-opacity=".5"></stop>
            <stop offset=".55" stop-color="#000" stop-opacity=".27"></stop>
            <stop offset="1" stop-color="#000" stop-opacity="0"></stop>
          </radialGradient>
          <g id="pin">
            <path d="M0 80C-9 59-29 48-29 30A29 28.5 0 0 1 29 30C29 48 9 59 0 80Z" fill="#439184" stroke="#8bc6be" stroke-width="3.6"></path>
            <path d="M0 23C-4 19-12 18-18 16V40C-12 41-8 43-4 45.500Q0 47 4 45.500C8 43 12 41 18 40V16C12 18 4 19 0 23Z" fill="#fff" stroke="#2b6f64" stroke-width="1.8"></path>
            <path d="M0 23V46" stroke="#2b6f64" stroke-width="2"></path>
          </g>
        </defs>
        ${SEA.map(([q, p]) => svg`<path class="sea" d=${rough(q, p, 1.6, true)}></path>`)}
        <path d="M744 1630H1455" stroke="#b3d1dc" stroke-width="11"></path>
        <path d="M1601 1640V1800" stroke="#b3d1dc" stroke-width="9"></path>
        <path d="M1599 1790V2255" stroke="#b3d1dc" stroke-width="9"></path>
        <path d="M1790 1631H2095" stroke="#b3d1dc" stroke-width="9"></path>
        <path d="M1600 1330V1415" stroke="#b3d1dc" stroke-width="6"></path>
        ${LAND.map(([q, p]) => svg`<path class="land" d=${rough(q, p, 1.6, true)}></path>`)}
        <path d="M1245 1631H1308" stroke="#f0efea" stroke-width="7"></path>
        <path d="M1480 1631H1822" stroke="#f0efea" stroke-width="9"></path>
        <path d="M1600 1450V1765" stroke="#f0efea" stroke-width="9"></path>
        ${LAKES.map(([q, p]) => svg`<path class="lake" d=${line(q, p, true)}></path>`)}
        ${this.paths(ADMIN, "admin", 3)}
        ${this.paths(TRACKS, "track", 1.5)}
        ${this.paths(ROADS, "road", 1.6)}
        ${this.paths(BORDERS, "border", 2.2)}
        ${SEALINES.map(([q, p]) => svg`<path class="line offshore" d=${line(q, p)}></path>`)}
        ${DOTS.map(([q, x, y, k]) => svg`<circle cx=${px(q, x)} cy=${py(q, y)} r=${k === "t" ? 3 : 4.600} fill="#fff" stroke="#6b6b6b" stroke-width="1.6"></circle>
          ${k === "k" ? svg`<circle cx=${px(q, x)} cy=${py(q, y)} r="1.800" fill="#555"></circle>` : null}`)}
        ${LABELS.map(([q, t, a, b, y, k]) => svg`<text class=${"label " + k} x=${px(q, a)} y=${py(q, y)} textLength=${(b - a) * SX} lengthAdjust="spacingAndGlyphs">${t}</text>`)}
        ${markers.map((m) => svg`<ellipse cx=${m.x + 3} cy=${m.y + 84} rx="34" ry="18" fill="url(#sh)"></ellipse>`)}
        ${markers.map((m) => svg`<use href="#pin" x=${m.x} y=${m.y + 1}></use>`)}
      </svg>
      <div class="control zoom">
        <div class="step"><svg width="20" height="20" viewBox="0 0 20 20"><path d="M0 11H20M10 1V21" stroke="#000" stroke-width="4"></path></svg></div>
        <div class="step"><svg width="16" height="20" viewBox="0 0 16 20"><path d="M0 10H16" stroke="#000" stroke-width="4"></path></svg></div>
      </div>
      <div class="control full">
        <svg width="32" height="32" viewBox="0 0 32 32"><path d="M2 11V2H11M21 2H30V11M30 21V30H21M11 30H2V21" fill="none" stroke="#3c3c3c" stroke-width="4"></path></svg>
      </div>
      <div class="control layers">
        <svg width="54" height="52" viewBox="0 0 54 52">
          <path d="M27 16L52 34L27 51L2 34Z" fill="#b9b9b9" stroke="#757575" stroke-width="1.5"></path>
          <path d="M27 9L52 27L27 44L2 27Z" fill="#c9c9c9" stroke="#6e6e6e" stroke-width="1.5"></path>
          <path d="M27 2L52 19L27 35L2 19Z" fill="#ececec"></path>
          <path d="M27 10L46 21L27 34L8 21Z" fill="#dadada"></path>
          <path d="M2 19L27 35L52 19" fill="none" stroke="#777" stroke-width="1.5"></path>
        </svg>
      </div>
    `;
  }
}
customElements.define("report-map", ReportMap);

const monk = (ring: string) => svg`
  <circle r="69" fill=${ring}></circle>
  <path d="M-14 -34Q-9 -46 1 -46Q12 -46 16 -34L28 -26L56 12Q57 21 49 21L24 13V45H-22V13L-46 21Q-55 21 -54 12L-26 -26Z" fill="#449184"></path>
  <path d="M-16 -33Q-12 -35 -8 -34Q1 -30 10 -34Q15 -35 18 -33" fill="none" stroke=${ring} stroke-width="2.600"></path>
  <path d="M-5 -25H7" stroke=${ring} stroke-width="2.600"></path>
  <circle cx="-15" cy="-21" r="11.500" fill="#449184" stroke=${ring} stroke-width="2.600"></circle>
  <circle cx="17" cy="-21" r="11.500" fill="#449184" stroke=${ring} stroke-width="2.600"></circle>
  <circle cx="-15" cy="-21" r="4.800" fill=${ring}></circle>
  <circle cx="17" cy="-21" r="4.800" fill=${ring}></circle>
  <path d="M-24 -11Q-24 -5 -29 0Q-17 -4 -5 -5Q-9 -7 -9 -11Q-16 -7 -24 -11ZM26 -11Q26 -5 31 0Q19 -4 7 -5Q11 -7 11 -11Q18 -7 26 -11Z" fill=${ring}></path>
  <text x="-15" y="37" textLength="32" lengthAdjust="spacingAndGlyphs" font-family="Open Sans, sans-serif" font-weight="600" font-size="35" fill=${ring}>m</text>`;

const lens = (color: string) => svg`
  <circle cx="10.500" cy="10.500" r="8.800" fill="none" stroke=${color} stroke-width="3.200"></circle>
  <path d="M18 17.500L25.500 24.500" stroke=${color} stroke-width="5" stroke-linecap="round"></path>`;

const ICONS: Record<string, unknown> = {
  bulb: svg`<path d="M24.500 44C24 34 12.500 30 12.500 17.500C12.500 7 20 2.500 30 2.500C40 2.500 47.500 7 47.500 17.500C47.500 30 36 34 35.500 44Z" fill="none" stroke="#449184" stroke-width="6"></path>
    <path d="M21.500 50.500H38.500V57Q37 60.500 30 60.500Q23 60.500 21.500 57Z" fill="#449184"></path>`,
  friend: svg`<path d="M0 56V44Q3 39 14 34V31Q10 26 9.500 20Q7 14 9 12Q10 3 20 3Q32 3 33 12Q35 15 32 20Q31 26 28 31V34Q40 38 48 45V56Z" fill="#449184"></path>
    <path d="M36 29.500H60M48 18V41" stroke="#449184" stroke-width="6"></path>`,
  book: svg`<path d="M5 5L30 13L55 5V46L30 54L5 46ZM30 13V54" fill="none" stroke="#449184" stroke-width="5.500" stroke-linejoin="round"></path>
    <path d="M12 20L23 24M12 33L23 37M48 20L37 24M48 33L37 37" stroke="#449184" stroke-width="4"></path>`,
  lens: svg`<g transform="translate(6 6) scale(1.760)">${lens("#449184")}</g>`,
  none: svg``,
};

type Step = { icon: string; link?: boolean; title: [string, number][]; gap: number; body: [string, number, boolean?][] };
const STEPS: Step[] = [
  { icon: "bulb", link: true, gap: 316, title: [["SCEGLI UN PROGETTO", 380]], body: [["Scegli un progetto interessante da", 495], ["monitorare su", 202], ["www.opencoesione.gov.it", 373, true]] },
  { icon: "friend", gap: 316, title: [["CHIAMA GLI AMICI", 317]], body: [["Organizza un gruppo di monitoraggio", 541], ["interessato a verificare come sono", 499], ["spesi i fondi pubblici", 292]] },
  { icon: "book", gap: 356, title: [["STUDIA LA STORIA DEL", 391], ["PROGETTO", 188]], body: [["Cerca tutte le informazioni sul progetto", 568], ["tra documenti amministrativi, decisioni", 568], ["politiche, news e dati di contesto", 479]] },
  { icon: "lens", gap: 368, title: [["ESPLORA SUL CAMPO", 371]], body: [["Verifica lo stato di avanzamento del", 519], ["progetto scelto, intervista i referenti e", 550], ["gli attuatori, raccogli altre", 376], ["informazioni.", 188]] },
  { icon: "none", gap: 60, title: [], body: [] },
];
const NAV: [string, number, string][] = [
  ["HOME", 71, "home"], ["COS’E’", 78, ""], ["REPORT", 98, ""], ["BLOG", 66, ""], ["CONTATTI", 119, ""], ["LOGIN", 74, "login"],
];

class AppRoot extends LitElement {
  static styles = css`
    :host { display: block; width: 4096px; height: 2255px; overflow: hidden; background: #2a2a2b; }
    * { box-sizing: border-box; }
    svg { display: block; overflow: visible; }
    .window { width: 4090px; height: 2255px; border-right: 2px solid #a5a5a5; border-radius: 8px 10px 10px 0; overflow: hidden; background: #fefefe; display: flex; flex-direction: column; }
    .tabs { height: 71px; flex: none; background: #202122; display: flex; justify-content: space-between; align-items: center; border-bottom: 1px solid #161616; }
    .left { display: flex; height: 71px; align-items: flex-end; position: relative; }
    .strip { width: 700px; height: 71px; }
    .tabtitle { position: absolute; left: 221px; top: 28px; height: 32px; width: 351px; overflow: hidden; font: 500 24px/32px Inter, "Liberation Sans", sans-serif; color: #fff; -webkit-mask-image: linear-gradient(90deg, #000 74%, transparent 101%); mask-image: linear-gradient(90deg, #000 74%, transparent 101%); }
    .incognito { margin-right: 20px; }
    .toolbar { height: 74px; flex: none; background: #505050; border-bottom: 2px solid #2c2c2c; display: flex; align-items: center; padding: 1px 0 0 20px; }
    .btns { width: 221px; height: 54px; }
    .address { width: 3774px; height: 54px; background: #616161; border: 1.5px solid #393939; border-radius: 7px; display: flex; align-items: center; color: #fff; font: 400 27px/54px Inter, "Liberation Sans", sans-serif; padding: 0 14px 0 12px; }
    .secure { font-weight: 500; margin-left: 9px; width: 152px; }
    .vr { width: 1.5px; height: 32px; background: #c6c6c6; margin: 0 13px 0 5px; }
    .grow { flex: 1; }
    .dots { width: 73px; display: flex; flex-direction: column; align-items: center; gap: 4px; }
    .dots i { width: 6px; height: 6px; border-radius: 50%; background: #e2e2e2; }
    .social { height: 62px; flex: none; border-bottom: 2px solid #e1e1e1; display: flex; justify-content: flex-end; }
    .tw { width: 88px; border-right: 2px solid #e1e1e1; padding: 18px 0 0 43px; }
    .fb { width: 143px; padding: 16px 0 0 23px; }
    .head { height: 232px; flex: none; }
    .nav { height: 104px; flex: none; border-top: 2px solid #dedede; border-bottom: 2px solid #dedede; display: flex; padding-left: 82px; font: 500 25px/100px "Open Sans", "Noto Sans", sans-serif; color: #6c6c6c; -webkit-text-stroke: .35px currentColor; }
    .item { width: 180px; border-left: 2px solid #dedede; display: flex; justify-content: center; height: 100px; }
    .home { color: #333; height: 102px; border-bottom: 4px solid #447a67; }
    .login { width: 180px; background: #447a67; color: #fff; font-weight: 600; -webkit-text-stroke: 0; }
    .find { width: 180px; border-left: 2px solid #dedede; border-right: 2px solid #dedede; margin-right: 82px; display: flex; align-items: center; justify-content: center; }
    .main { flex: 1; padding: 99px 0 0 744px; min-height: 0; }
    .intro { font: 600 40px/44px "Open Sans", "Noto Sans", sans-serif; color: #757575; }
    .u { text-decoration: underline; text-decoration-thickness: 3px; text-underline-offset: 5px; }
    .cols { display: flex; margin-top: 112px; }
    .report { width: 1682px; }
    .heading { display: flex; height: 109px; align-items: flex-start; gap: 33px; }
    .heading h1 { margin: 0; font: 600 56px/60px "Open Sans", "Noto Sans", sans-serif; color: #449184; padding-top: 5px; }
    .rule { flex: 1; height: 2px; background: #b5cfca; margin-top: 47px; }
    .steps { margin-left: 160px; padding-top: 5px; }
    .step { display: flex; gap: 60px; }
    .bubble { flex: none; width: 128px; height: 128px; border: 2px solid #4b9488; border-radius: 50%; display: flex; align-items: center; justify-content: center; }
    .title { font: 600 36px/38px "Open Sans", "Noto Sans", sans-serif; color: #449184; padding-top: 8px; }
    .title .u { text-decoration-thickness: 2.5px; text-underline-offset: 3px; }
    .body { font: 400 30px/52px "Open Sans", "Noto Sans", sans-serif; color: #000; margin-top: 20px; }
    .link { color: #447a67; text-decoration: underline; text-decoration-thickness: 2px; text-underline-offset: 4px; }
    .privacy { position: absolute; left: 3548px; top: 2193px; width: 340px; height: 80px; border: 2px solid #444; background: #fff; font: 400 26px/60px "Open Sans", "Noto Sans", sans-serif; color: #000; padding-left: 22px; }
    .frame { position: relative; width: 4096px; height: 2255px; overflow: hidden; }
  `;
  render() {
    return html`
      <div class="frame">
        <div class="window">
          <div class="tabs">
            <div class="left">
              <svg class="strip" viewBox="0 0 700 71">
                <circle cx="36" cy="35" r="12" fill="#ed6b60"></circle>
                <circle cx="76" cy="35" r="12" fill="#f5c04f"></circle>
                <circle cx="116" cy="35" r="12" fill="#63c656"></circle>
                <path d="M144 72C148 68 149 64 151 60L167 20Q169 15 173 15H599Q602 15 604 20L621 62Q624 71 629 72Z" fill="#505050" stroke="#151515" stroke-width="1"></path>
                <path d="M626 31H672Q675 31 677 34L686 56Q687 60 683 60H638Q635 60 633 56L623 34Q622 31 626 31Z" fill="#383838"></path>
                <circle cx="194" cy="44" r="15" fill="#474747"></circle>
                <path d="M194 33C190 33 188 36 188 39L182 51Q182 54 185 53L189 50V54H199V50L203 53Q206 54 206 51L200 39C200 36 198 33 194 33Z" fill="#0f8f80"></path>
                <circle cx="191" cy="40" r="2" fill="none" stroke="#2a4a46" stroke-width="1.200"></circle>
                <circle cx="197" cy="40" r="2" fill="none" stroke="#2a4a46" stroke-width="1.200"></circle>
                <path d="M191 53V49.500H197V53M194 50V53" fill="none" stroke="#24504a" stroke-width="1.200"></path>
                <path d="M580 37L592 49.500M592 37L580 49.500" stroke="#e3e3e3" stroke-width="2.400"></path>
              </svg>
              <div class="tabtitle"><fit-line .w=${350}>Monithon – Maratona di monito</fit-line></div>
            </div>
            <svg class="incognito" width="32" height="32" viewBox="0 0 32 32">
              <path d="M8 8L10 0.500Q13 2.500 16 1.500Q20 2.500 22 0.500L24 8ZM0 15L8 11H24L32 15Z" fill="#fff"></path>
              <circle cx="8.500" cy="25" r="5" fill="none" stroke="#fff" stroke-width="2"></circle>
              <circle cx="23.500" cy="25" r="5" fill="none" stroke="#fff" stroke-width="2"></circle>
              <path d="M13 24.500Q16 22.500 19 24.500" fill="none" stroke="#fff" stroke-width="2"></path>
            </svg>
          </div>
          <div class="toolbar">
            <svg class="btns" viewBox="20 80 221 54" fill="none" stroke-width="3">
              <path d="M49 107H25M36 95.500L24.500 107L36 118.500" stroke="#eaeaea"></path>
              <path d="M79 107H104M93 95.500L104.500 107L93 118.500" stroke="#787878"></path>
              <path d="M157.500 99A11.500 11.500 0 1 0 159 111" stroke="#e4e4e4"></path>
              <path d="M162 94V106H150Z" fill="#e4e4e4"></path>
              <path d="M204 96L194 107.500H197.500V118H211V107.500H214.500Z" stroke="#e4e4e4"></path>
            </svg>
            <div class="address">
              <svg width="28" height="28" viewBox="0 0 28 28"><circle cx="14" cy="14" r="12" fill="none" stroke="#fff" stroke-width="2.600"></circle><path d="M14 12.500V21M14 7.500V10.500" stroke="#fff" stroke-width="3"></path></svg>
              <div class="secure"><fit-line .w=${145}>Not Secure</fit-line></div>
              <div class="vr"></div>
              <fit-line .w=${215}>www.monithon.it</fit-line>
              <div class="grow"></div>
              <svg width="30" height="28" viewBox="0 0 30 28"><path d="M15 3L18.300 11H27L20.200 16.500L22.600 25L15 20.200L7.400 25L9.800 16.500L3 11H11.700Z" fill="none" stroke="#e2e2e2" stroke-width="2.600"></path></svg>
            </div>
            <div class="dots"><i></i><i></i><i></i></div>
          </div>

          <div class="social">
            <div class="tw">
              <svg width="30" height="30" viewBox="0 0 30 30">
                <path d="M29 4.500Q27.500 6.500 26 7.500C26.500 16 20 24 10.500 24Q4.500 24 0.500 21.500Q6 21.500 9 19Q5 18.500 3.500 15H6Q1.500 13.500 1.500 8.500L4 9.500Q0 6 2.500 1.500Q7.500 7 14.500 7.500C13.500 3 17 0 20.500 0Q23.500 0 25 2L28.500 0.500Q28 3 26.500 4.500Z" fill="#707070"></path>
                <path d="M0 27H29" stroke="#707070" stroke-width="2"></path>
              </svg>
            </div>
            <div class="fb">
              <svg width="18" height="30" viewBox="0 0 18 30">
                <path d="M6 29V15H0.500V10H6V7Q6 0.500 13 0.500H17V5.500H14Q11.500 5.500 11.500 8V10H17V15H11.500V29Z" fill="#707070"></path>
                <path d="M0 29H2M15 29H17" stroke="#707070" stroke-width="2"></path>
              </svg>
            </div>
          </div>

          <svg class="head" width="1400" height="232" viewBox="0 207 1400 232">
            <g transform="translate(167 294.700)">${monk("#4b4847")}</g>
            <g font-family="Open Sans, Noto Sans, sans-serif">
              <text x="512" y="299" font-size="98" textLength="208" lengthAdjust="spacingAndGlyphs" fill="#a9a9a9" stroke="#a9a9a9" stroke-width="1.500">toring</text>
              <text x="346" y="349" font-size="98" textLength="176" lengthAdjust="spacingAndGlyphs" fill="#a0a0a0" stroke="#a0a0a0" stroke-width="1.500">mara</text>
              <text x="262" y="299" font-size="98" font-weight="700" textLength="250" lengthAdjust="spacingAndGlyphs" fill="#000">moni</text>
              <text x="523" y="349.500" font-size="98" font-weight="700" textLength="229" lengthAdjust="spacingAndGlyphs" fill="#000">thon</text>
              <g font-size="26.500" font-weight="600" fill="#3d3d3d">
                <text x="892" y="246" textLength="386" lengthAdjust="spacingAndGlyphs">Maratona di monitoraggio civico</text>
                <text x="892" y="280" textLength="389" lengthAdjust="spacingAndGlyphs">delle politiche pubbliche in Italia</text>
                <text x="892" y="314" textLength="202" lengthAdjust="spacingAndGlyphs">basata sui dati di</text>
              </g>
            </g>
            <g font-family="Liberation Serif, serif" font-size="48">
              <text x="892" y="358" textLength="134" lengthAdjust="spacingAndGlyphs" fill="#1d1b22">OPEN</text>
              <text x="1026" y="358" textLength="255" lengthAdjust="spacingAndGlyphs" fill="#aaa5a3">COESIONE</text>
            </g>
          </svg>

          <div class="nav">
            ${NAV.map(([t, w, c]) => html`<div class=${"item " + c}><fit-line .w=${w}>${t}</fit-line></div>`)}
            <div class="grow"></div>
            <div class="find"><svg width="28" height="28" viewBox="0 0 28 28">${lens("#707070")}</svg></div>
          </div>

          <div class="main">
            <div class="intro">
              <fit-line .w=${2598}>Monithon è un’iniziativa indipendente di monitoraggio civico. La comunità di Monithon è aperta a tutti coloro che vogliono conoscere e</fit-line>
              <fit-line .w=${2542}>valutare sul campo come vengono spesi i fondi pubblici in Italia. <span class="u">OpenCoesione</span> ci aiuta ad individuare dove sono i finanziamenti per</fit-line>
              <fit-line .w=${584}>organizzare le nostre ricerche.</fit-line>
            </div>
            <div class="cols">
              <div class="report">
                <div class="heading"><h1><fit-line .w=${223}>REPORT</fit-line></h1><div class="rule"></div></div>
                <report-map></report-map>
              </div>
              <div class="steps">
                ${STEPS.map((s) => html`
                  <div class="step" style="height:${s.gap}px">
                    <div class="bubble"><svg width="60" height="64" viewBox="0 0 60 60">${ICONS[s.icon]}</svg></div>
                    <div>
                      <div class="title">${s.title.map(([t, w]) => html`<fit-line .w=${w}>${s.link ? html`<span class="u">${t}</span>` : t}</fit-line>`)}</div>
                      <div class="body">${s.body.map(([t, w, l]) => html`<fit-line .w=${w}><span class=${l ? "link" : ""}>${t}</span></fit-line>`)}</div>
                    </div>
                  </div>`)}
              </div>
            </div>
          </div>
        </div>
        <div class="privacy"><fit-line .w=${294}>Privacy &amp; Cookies Policy</fit-line></div>
      </div>
    `;
  }
}
customElements.define("app-root", AppRoot);
